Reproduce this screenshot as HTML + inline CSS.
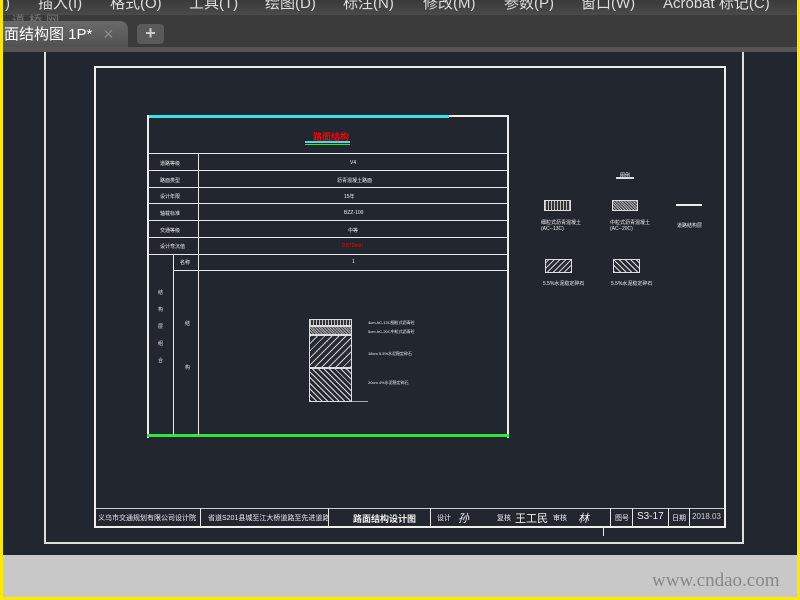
<!DOCTYPE html>
<html><head><meta charset="utf-8"><style>
*{margin:0;padding:0;box-sizing:border-box}
body{width:800px;height:600px;overflow:hidden;background:#ffe800;position:relative;font-family:"Liberation Sans","Noto Sans CJK SC",sans-serif}
.a{position:absolute}
.w{position:absolute;background:#e8e8e8}
.t{position:absolute;color:#eee;font-size:5px;white-space:nowrap}
.m{position:absolute;top:-4px}
</style></head><body>
<div class="a" style="left:3px;top:0;width:794px;height:597px;background:#22272f"></div>
<div class="a" style="left:3px;top:0;width:794px;height:15px;background:linear-gradient(#3a3a3a,#4a4a4a);color:#ddd;font-size:15px;line-height:15px;overflow:hidden;white-space:nowrap">
<span class="m" style="left:2px">)</span><span class="m" style="left:35px">插入(I)</span><span class="m" style="left:107px">格式(O)</span><span class="m" style="left:186px">工具(T)</span><span class="m" style="left:262px">绘图(D)</span><span class="m" style="left:340px">标注(N)</span><span class="m" style="left:420px">修改(M)</span><span class="m" style="left:501px">参数(P)</span><span class="m" style="left:578px">窗口(W)</span><span class="m" style="left:660px">Acrobat 标记(C)</span></div>
<div class="a" style="left:3px;top:15px;width:794px;height:33px;background:#3b3b3b"></div>
<div class="a" style="left:12px;top:10px;color:#777;font-size:13px;letter-spacing:4px">道桥网</div>
<div class="a" style="left:3px;top:21px;width:125px;height:27px;background:linear-gradient(#6a6a6a,#505050);border-radius:0 8px 0 0;color:#fff;font-size:15px;line-height:27px;padding-left:1px">面结构图 1P* <span style="color:#888;font-size:14px;margin-left:6px">✕</span></div>
<div class="a" style="left:137px;top:24px;width:27px;height:20px;background:#5a5a5a;border-radius:4px;color:#ccc;font-size:18px;line-height:19px;text-align:center;font-weight:bold">+</div>
<div class="a" style="left:3px;top:47px;width:794px;height:5px;background:#555"></div>
<div class="a" style="left:3px;top:555px;width:794px;height:42px;background:#c8c8c8"></div>
<div class="a" style="left:652px;top:570px;color:#888;font-size:19px;font-family:'Liberation Serif',serif">www.cndao.com</div>
<div class="a" style="left:44px;top:52px;width:700px;height:492px;border:2px solid #ddd;border-top:none"></div>
<div class="a" style="left:94px;top:66px;width:632px;height:462px;border:2px solid #eee"></div>
<div class="a" style="left:96px;top:508px;width:628px;height:18px;border-top:1px solid #ccc"></div>
<div class="t" style="left:98px;top:513px;font-size:7px">义乌市交通规划有限公司设计院</div>
<div class="w" style="left:200px;top:508px;width:1px;height:18px"></div>
<div class="t" style="left:208px;top:513px;font-size:7px">省道S201县城至江大桥道路至先进道路</div>
<div class="w" style="left:328px;top:508px;width:1px;height:18px"></div>
<div class="t" style="left:353px;top:512px;font-size:9px;font-weight:bold">路面结构设计图</div>
<div class="w" style="left:430px;top:508px;width:1px;height:18px"></div>
<div class="t" style="left:437px;top:513px;font-size:7px">设计</div>
<div class="t" style="left:458px;top:510px;font-size:11px;font-style:italic">孙</div>
<div class="t" style="left:497px;top:513px;font-size:7px">复核</div>
<div class="t" style="left:515px;top:510px;font-size:11px">王工民</div>
<div class="t" style="left:553px;top:513px;font-size:7px">审核</div>
<div class="t" style="left:578px;top:510px;font-size:11px;font-style:italic">林</div>
<div class="w" style="left:610px;top:508px;width:1px;height:18px"></div>
<div class="t" style="left:615px;top:513px;font-size:7px">图号</div>
<div class="w" style="left:632px;top:508px;width:1px;height:18px"></div>
<div class="t" style="left:637px;top:511px;font-size:10px">S3-17</div>
<div class="w" style="left:668px;top:508px;width:1px;height:18px"></div>
<div class="t" style="left:672px;top:513px;font-size:7px">日期</div>
<div class="w" style="left:689px;top:508px;width:1px;height:18px"></div>
<div class="t" style="left:692px;top:512px;font-size:8px;color:#ccc">2018.03</div>
<div class="w" style="left:603px;top:526px;width:1px;height:10px"></div>
<div class="a" style="left:147px;top:115px;width:362px;height:323px;border:2px solid #eee;border-top:none;border-bottom:none"></div>
<div class="a" style="left:149px;top:115px;width:300px;height:3px;background:#3ee0e8"></div>
<div class="a" style="left:449px;top:115px;width:59px;height:2px;background:#eee"></div>
<div class="a" style="left:147px;top:434px;width:362px;height:3px;background:#2ee83a"></div>
<div class="t" style="left:313px;top:130px;color:#f00;font-size:9px;font-weight:bold">路面结构</div>
<div class="a" style="left:305px;top:141px;width:45px;height:2px;background:#3ee0e8"></div>
<div class="a" style="left:305px;top:144px;width:45px;height:1px;background:#2ee83a"></div>
<div class="w" style="left:149px;top:153px;width:358px;height:1px"></div>
<div class="w" style="left:149px;top:170px;width:358px;height:1px"></div>
<div class="w" style="left:149px;top:187px;width:358px;height:1px"></div>
<div class="w" style="left:149px;top:203px;width:358px;height:1px"></div>
<div class="w" style="left:149px;top:220px;width:358px;height:1px"></div>
<div class="w" style="left:149px;top:237px;width:358px;height:1px"></div>
<div class="w" style="left:149px;top:254px;width:358px;height:1px"></div>
<div class="w" style="left:174px;top:270px;width:333px;height:1px"></div>
<div class="w" style="left:198px;top:153px;width:1px;height:282px"></div>
<div class="w" style="left:173px;top:254px;width:1px;height:181px"></div>
<div class="t" style="left:160px;top:160px">道路等级</div><div class="t" style="left:350px;top:160px">V4</div>
<div class="t" style="left:160px;top:177px">路面类型</div><div class="t" style="left:337px;top:177px">沥青混凝土路面</div>
<div class="t" style="left:160px;top:193px">设计年限</div><div class="t" style="left:344px;top:193px">15年</div>
<div class="t" style="left:160px;top:210px">轴载标准</div><div class="t" style="left:344px;top:210px">BZZ-100</div>
<div class="t" style="left:160px;top:227px">交通等级</div><div class="t" style="left:348px;top:227px">中等</div>
<div class="t" style="left:160px;top:243px">设计弯沉值</div><div class="t" style="left:342px;top:243px;color:#f00">0.572mm</div>
<div class="t" style="left:180px;top:259px">名称</div><div class="t" style="left:352px;top:259px">1</div>
<div class="t" style="left:158px;top:285px;line-height:17px;white-space:normal;width:6px">结构层组合</div>
<div class="t" style="left:185px;top:320px">结</div><div class="t" style="left:185px;top:364px">构</div>
<div class="a" style="left:309px;top:319px;width:43px;height:7px;background:repeating-linear-gradient(90deg,#bbb 0 1px,#333 1px 3px);border:1px solid #ddd"></div>
<div class="a" style="left:309px;top:326px;width:43px;height:9px;background:repeating-linear-gradient(45deg,#aaa 0 1px,#3a3f46 1px 2px);border:1px solid #ddd"></div>
<div class="a" style="left:309px;top:335px;width:43px;height:33px;background:repeating-linear-gradient(-45deg,#ccc 0 1px,#262b33 1px 5px);border:1px solid #ddd"></div>
<div class="a" style="left:309px;top:368px;width:43px;height:34px;background:repeating-linear-gradient(45deg,#ddd 0 1px,#262b33 1px 4px);border:1px solid #ddd"></div>
<div class="a" style="left:352px;top:401px;width:16px;height:1px;background:#aaa"></div>
<div class="t" style="left:368px;top:320px;font-size:4px">4cm AC-13C细粒式沥青砼</div>
<div class="t" style="left:368px;top:329px;font-size:4px">5cm AC-20C中粒式沥青砼</div>
<div class="t" style="left:368px;top:351px;font-size:4px">18cm 5.5%水泥稳定碎石</div>
<div class="t" style="left:368px;top:380px;font-size:4px">20cm 4%水泥稳定碎石</div>
<div class="t" style="left:620px;top:172px">图例</div>
<div class="a" style="left:616px;top:177px;width:18px;height:2px;background:#ddd"></div>
<div class="a" style="left:544px;top:200px;width:27px;height:11px;border:1px solid #ddd;background:repeating-linear-gradient(90deg,#bbb 0 1px,#333 1px 3px)"></div>
<div class="a" style="left:612px;top:200px;width:26px;height:11px;border:1px solid #ddd;background:repeating-linear-gradient(45deg,#aaa 0 1px,#3a3f46 1px 2px)"></div>
<div class="a" style="left:676px;top:204px;width:26px;height:2px;background:#eee"></div>
<div class="t" style="left:541px;top:219px">细粒式沥青混凝土<br>(AC--13C)</div>
<div class="t" style="left:610px;top:219px">中粒式沥青混凝土<br>(AC--20C)</div>
<div class="t" style="left:677px;top:222px">道路结构层</div>
<div class="a" style="left:545px;top:259px;width:27px;height:14px;border:1px solid #ddd;background:repeating-linear-gradient(-45deg,#ccc 0 1px,#262b33 1px 4px)"></div>
<div class="a" style="left:613px;top:259px;width:27px;height:14px;border:1px solid #ddd;background:repeating-linear-gradient(45deg,#ddd 0 1px,#262b33 1px 4px)"></div>
<div class="t" style="left:543px;top:280px">5.5%水泥稳定碎石</div>
<div class="t" style="left:611px;top:280px">5.5%水泥稳定碎石</div>
</body></html>
